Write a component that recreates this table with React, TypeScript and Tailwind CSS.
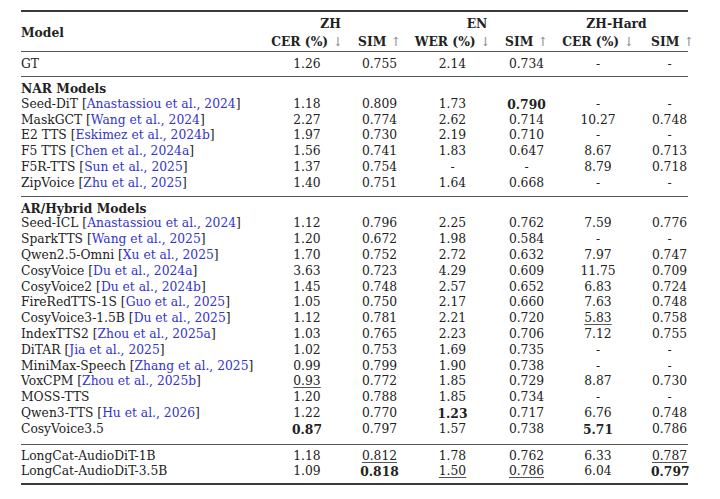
import React from "react";

type Row = { name: string; cite?: string; vals: string[] };

const nar: Row[] = [
  { name: "Seed-DiT", cite: "Anastassiou et al., 2024", vals: ["1.18", "0.809", "1.73", "**0.790", "-", "-"] },
  { name: "MaskGCT", cite: "Wang et al., 2024", vals: ["2.27", "0.774", "2.62", "0.714", "10.27", "0.748"] },
  { name: "E2 TTS", cite: "Eskimez et al., 2024b", vals: ["1.97", "0.730", "2.19", "0.710", "-", "-"] },
  { name: "F5 TTS", cite: "Chen et al., 2024a", vals: ["1.56", "0.741", "1.83", "0.647", "8.67", "0.713"] },
  { name: "F5R-TTS", cite: "Sun et al., 2025", vals: ["1.37", "0.754", "-", "-", "8.79", "0.718"] },
  { name: "ZipVoice", cite: "Zhu et al., 2025", vals: ["1.40", "0.751", "1.64", "0.668", "-", "-"] },
];

const ar: Row[] = [
  { name: "Seed-ICL", cite: "Anastassiou et al., 2024", vals: ["1.12", "0.796", "2.25", "0.762", "7.59", "0.776"] },
  { name: "SparkTTS", cite: "Wang et al., 2025", vals: ["1.20", "0.672", "1.98", "0.584", "-", "-"] },
  { name: "Qwen2.5-Omni", cite: "Xu et al., 2025", vals: ["1.70", "0.752", "2.72", "0.632", "7.97", "0.747"] },
  { name: "CosyVoice", cite: "Du et al., 2024a", vals: ["3.63", "0.723", "4.29", "0.609", "11.75", "0.709"] },
  { name: "CosyVoice2", cite: "Du et al., 2024b", vals: ["1.45", "0.748", "2.57", "0.652", "6.83", "0.724"] },
  { name: "FireRedTTS-1S", cite: "Guo et al., 2025", vals: ["1.05", "0.750", "2.17", "0.660", "7.63", "0.748"] },
  { name: "CosyVoice3-1.5B", cite: "Du et al., 2025", vals: ["1.12", "0.781", "2.21", "0.720", "__5.83", "0.758"] },
  { name: "IndexTTS2", cite: "Zhou et al., 2025a", vals: ["1.03", "0.765", "2.23", "0.706", "7.12", "0.755"] },
  { name: "DiTAR", cite: "Jia et al., 2025", vals: ["1.02", "0.753", "1.69", "0.735", "-", "-"] },
  { name: "MiniMax-Speech", cite: "Zhang et al., 2025", vals: ["0.99", "0.799", "1.90", "0.738", "-", "-"] },
  { name: "VoxCPM", cite: "Zhou et al., 2025b", vals: ["__0.93", "0.772", "1.85", "0.729", "8.87", "0.730"] },
  { name: "MOSS-TTS", vals: ["1.20", "0.788", "1.85", "0.734", "-", "-"] },
  { name: "Qwen3-TTS", cite: "Hu et al., 2026", vals: ["1.22", "0.770", "**1.23", "0.717", "6.76", "0.748"] },
  { name: "CosyVoice3.5", vals: ["**0.87", "0.797", "1.57", "0.738", "**5.71", "0.786"] },
];

const ours: Row[] = [
  { name: "LongCat-AudioDiT-1B", vals: ["1.18", "__0.812", "1.78", "0.762", "6.33", "__0.787"] },
  { name: "LongCat-AudioDiT-3.5B", vals: ["1.09", "**0.818", "__1.50", "__0.786", "6.04", "**0.797"] },
];

const GRID = "grid grid-cols-[243px_86px_59px_87px_61px_82px_49px]";

function Cell({ v, last }: { v: string; last?: boolean }) {
  let content: React.ReactNode = v;
  if (v.startsWith("**")) content = <span className="font-bold">{v.slice(2)}</span>;
  else if (v.startsWith("__"))
    content = <span className="underline decoration-[1px] underline-offset-[2px] decoration-[#555]">{v.slice(2)}</span>;
  return <div className={`text-center ${last ? "pl-[12px]" : ""}`}>{content}</div>;
}

function DataRow({ r }: { r: Row }) {
  return (
    <div className={`${GRID} h-[15.8px] leading-[15.8px]`}>
      <div className="whitespace-nowrap">
        {r.name}
        {r.cite && (
          <>
            {" "}[<span className="text-[#3434cc]">{r.cite}</span>]
          </>
        )}
      </div>
      {r.vals.map((v, i) => (
        <Cell key={i} v={v} last={i === 5} />
      ))}
    </div>
  );
}

function Arrow({ up }: { up?: boolean }) {
  return <span className="font-normal text-[#7d8a8c]">{up ? "↑" : "↓"}</span>;
}

export default function App() {
  return (
    <div
      className="w-[720px] h-[499px] bg-white text-[#222] text-[12.3px] overflow-hidden"
      style={{ fontFamily: '"DejaVu Serif", serif' }}
    >
      <div className="ml-[21px] w-[667px] pt-[10px]">
        <div className="h-[2px] bg-[#3a3a3a]" />
        {/* header */}
        <div className="mt-[3px] flex font-bold">
          <div className="w-[243px] flex items-center h-[36px]">Model</div>
          <div className="flex flex-col">
            <div className="flex h-[18px] leading-[18px]">
              <div className="w-[145px] text-center pr-[12px]">ZH</div>
              <div className="w-[148px] text-center pr-[12px]">EN</div>
              <div className="w-[131px] text-center pr-[12px]">ZH-Hard</div>
            </div>
            <div className="grid grid-cols-[86px_59px_87px_61px_82px_49px] h-[18px] leading-[18px] whitespace-nowrap">
              <div className="text-center">CER (%) <Arrow /></div>
              <div className="text-center">SIM <Arrow up /></div>
              <div className="text-center">WER (%) <Arrow /></div>
              <div className="text-center">SIM <Arrow up /></div>
              <div className="text-center">CER (%) <Arrow /></div>
              <div className="text-center pl-[12px]">SIM <Arrow up /></div>
            </div>
          </div>
        </div>
        <div className="h-[1px] bg-[#555]" />
        {/* GT */}
        <div className="pt-[4px] pb-[4px]">
          <div className={`${GRID} h-[16px] leading-[16px]`}>
            <div>GT</div>
            {["1.26", "0.755", "2.14", "0.734", "-", "-"].map((v, i) => (
              <Cell key={i} v={v} last={i === 5} />
            ))}
          </div>
        </div>
        <div className="h-[1px] bg-[#555]" />
        {/* NAR */}
        <div className="pt-[4px] pb-[4px]">
          <div className="h-[15.8px] leading-[15.8px] font-bold">NAR Models</div>
          {nar.map((r) => (
            <DataRow key={r.name} r={r} />
          ))}
        </div>
        <div className="h-[1px] bg-[#555]" />
        {/* AR */}
        <div className="pt-[4px] pb-[6px]">
          <div className="h-[15.8px] leading-[15.8px] font-bold">AR/Hybrid Models</div>
          {ar.map((r) => (
            <DataRow key={r.name} r={r} />
          ))}
        </div>
        <div className="h-[1px] bg-[#555]" />
        <div className="pt-[4px] pb-[3px]">
          {ours.map((r) => (
            <DataRow key={r.name} r={r} />
          ))}
        </div>
        <div className="h-[2px] bg-[#3a3a3a]" />
      </div>
    </div>
  );
}
